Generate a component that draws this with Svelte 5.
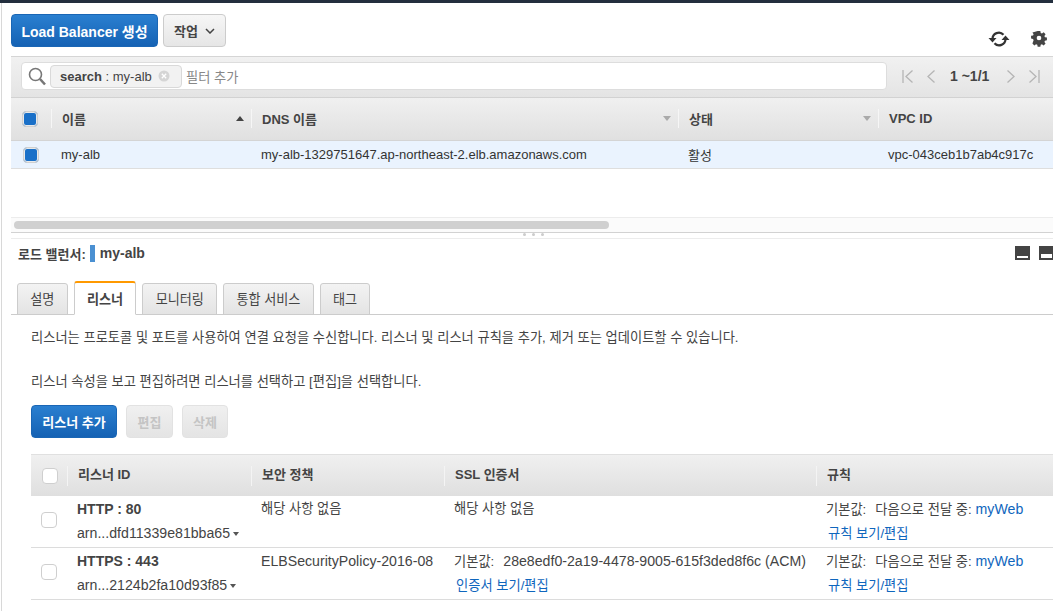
<script lang="ts">
	const columns = [
		{ label: '이름', width: 200, sort: 'up' },
		{ label: 'DNS 이름', width: 427, sort: 'down' },
		{ label: '상태', width: 200, sort: 'down' },
		{ label: 'VPC ID', width: 164, sort: '' }
	]

	const tabs = ['설명', '리스너', '모니터링', '통합 서비스', '태그']

	const listeners = [
		{
			name: 'HTTP : 80',
			arn: 'arn...dfd11339e81bba65',
			policy: '해당 사항 없음',
			cert: '',
			certLink: ''
		},
		{
			name: 'HTTPS : 443',
			arn: 'arn...2124b2fa10d93f85',
			policy: 'ELBSecurityPolicy-2016-08',
			cert: '28e8edf0-2a19-4478-9005-615f3ded8f6c (ACM)',
			certLink: '인증서 보기/편집'
		}
	]
</script>

<div class="page">
	<div class="topbar"></div>
	<main class="console">
		<div class="actions">
			<button class="btn primary create">Load Balancer 생성</button>
			<button class="btn menu">
				작업
				<svg width="10" height="6" viewBox="0 0 10 6"><path d="M1 1l4 4 4-4" fill="none" stroke="#444" stroke-width="1.5" /></svg>
			</button>
			<div class="tools">
				<svg width="22" height="18" viewBox="0 0 22 18">
					<path d="M4.5 9a6.3 6.3 0 0 1 11-4.2" fill="none" stroke="#333" stroke-width="2.2" />
					<path d="M17.5 9a6.3 6.3 0 0 1-11 4.2" fill="none" stroke="#333" stroke-width="2.2" />
					<path d="M0.5 8h8l-4 4.5z M13.5 10h8l-4-4.5z" fill="#333" />
				</svg>
				<svg width="16" height="16" viewBox="0 0 16 16">
					<path
						fill="#444"
						fill-rule="evenodd"
						d="M6.5 0h3l.4 2.2 1.4.6L13.2 1.5l2.1 2.1-1.3 1.9.6 1.4 2.2.4v3l-2.2.4-.6 1.4 1.3 1.9-2.1 2.1-1.9-1.3-1.4.6-.4 2.2h-3l-.4-2.2-1.4-.6-1.9 1.3-2.1-2.1L2 10.2l-.6-1.4L-.8 8.4v-3l2.2-.4.6-1.4L.7 1.8M8 5.2a2.6 2.6 0 1 0 0 5.2 2.6 2.6 0 0 0 0-5.2z"
						transform="translate(.8 0) scale(.9)"
					/>
				</svg>
			</div>
		</div>

		<div class="filterbar">
			<div class="search">
				<svg class="glass" width="18" height="19" viewBox="0 0 18 19">
					<circle cx="7.5" cy="7.5" r="6" fill="none" stroke="#777" stroke-width="1.6" />
					<path d="M12 12l5 5.5" stroke="#777" stroke-width="2.6" />
				</svg>
				<span class="token">
					<span><b>search</b> : my-alb</span>
					<svg width="12" height="12" viewBox="0 0 12 12">
						<circle cx="6" cy="6" r="5.5" fill="#d5d5d5" />
						<path d="M3.8 3.8l4.4 4.4M8.2 3.8l-4.4 4.4" stroke="#fff" stroke-width="1.3" />
					</svg>
				</span>
				<span class="placeholder">필터 추가</span>
			</div>
			<div class="pager">
				<svg width="11" height="13" viewBox="0 0 11 13"><path d="M1 0v13M10.5 .5L4 6.5l6.5 6" fill="none" stroke="#b5b5b5" stroke-width="1.3" /></svg>
				<svg class="gap" width="8" height="13" viewBox="0 0 8 13"><path d="M7.5 .5L1 6.5l6.5 6" fill="none" stroke="#b5b5b5" stroke-width="1.3" /></svg>
				<span class="count">1 ~1/1</span>
				<svg width="8" height="13" viewBox="0 0 8 13"><path d="M.5 .5L7 6.5l-6.5 6" fill="none" stroke="#b5b5b5" stroke-width="1.3" /></svg>
				<svg class="gap" width="11" height="13" viewBox="0 0 11 13"><path d="M10 0v13M.5 .5L7 6.5l-6.5 6" fill="none" stroke="#b5b5b5" stroke-width="1.3" /></svg>
			</div>
		</div>

		<div class="lb-head">
			<div class="check-cell"><span class="check on"></span></div>
			{#each columns as col}
				<div class="lb-col" style="width: {col.width}px">
					<span>{col.label}</span>
					{#if col.sort}<i class="sort {col.sort}"></i>{/if}
				</div>
			{/each}
		</div>
		<div class="lb-row">
			<div class="check-cell row-check"><span class="check on"></span></div>
			<div class="lb-cell" style="width: {columns[0].width}px">my-alb</div>
			<div class="lb-cell" style="width: {columns[1].width}px">my-alb-1329751647.ap-northeast-2.elb.amazonaws.com</div>
			<div class="lb-cell" style="width: {columns[2].width}px">활성</div>
			<div class="lb-cell" style="width: {columns[3].width}px">vpc-043ceb1b7ab4c917c</div>
		</div>

		<div class="scroller"><div class="thumb"></div></div>
		<div class="splitter"><span></span><span></span><span></span></div>

		<div class="title-row">
			<span class="title-label">로드 밸런서:</span>
			<span class="swatch"></span>
			<span class="title-name">my-alb</span>
			<span class="pane-icons">
				<span class="pane small"></span>
				<span class="pane large"></span>
			</span>
		</div>

		<div class="tabs">
			{#each tabs as tab, i}
				<div class="tab" class:active={i === 1}>{tab}</div>
			{/each}
		</div>

		<section class="detail">
			<p class="intro">리스너는 프로토콜 및 포트를 사용하여 연결 요청을 수신합니다. 리스너 및 리스너 규칙을 추가, 제거 또는 업데이트할 수 있습니다.</p>
			<p class="intro second">리스너 속성을 보고 편집하려면 리스너를 선택하고 [편집]을 선택합니다.</p>

			<div class="detail-actions">
				<button class="btn primary add">리스너 추가</button>
				<button class="btn disabled edit">편집</button>
				<button class="btn disabled del">삭제</button>
			</div>

			<div class="ls-grid ls-head">
				<div class="ls-check"><span class="check"></span></div>
				<div class="ls-th">리스너 ID</div>
				<div class="ls-th">보안 정책</div>
				<div class="ls-th">SSL 인증서</div>
				<div class="ls-th">규칙</div>
			</div>
			{#each listeners as row}
				<div class="ls-grid ls-row">
					<div class="ls-check body"><span class="check"></span></div>
					<div class="ls-td first">
						<strong>{row.name}</strong>
						<span class="arn">{row.arn}<i class="caret"></i></span>
					</div>
					<div class="ls-td" class:ko={!row.cert}>{row.policy}</div>
					<div class="ls-td">
						{#if row.cert}
							<span class="kv"><span class="ko">기본값:</span><em>{row.cert}</em></span>
							<a href="#cert" class="cert-link ko">{row.certLink}</a>
						{:else}
							<span class="ko">해당 사항 없음</span>
						{/if}
					</div>
					<div class="ls-td">
						<span class="kv"><span class="ko">기본값:</span><em class="ko">다음으로 전달 중:</em> <a href="#web">myWeb</a></span>
						<a href="#rules" class="rule-link ko">규칙 보기/편집</a>
					</div>
				</div>
			{/each}
		</section>
	</main>
</div>

<style>
	:global(body) {
		margin: 0;
		background: #fff;
		overflow: hidden;
	}

	.page {
		width: 1053px;
		height: 611px;
		overflow: hidden;
		font-family: 'Liberation Sans', 'Noto Sans CJK KR', sans-serif;
		font-size: 13px;
		color: #444;
	}

	.topbar {
		height: 3px;
		background: #232f3e;
	}

	.console {
		margin-left: 1px;
		padding-left: 9px;
		border-left: 1px solid #d8d8d8;
		height: 608px;
	}

	.ko {
		font-size: 13.25px;
	}

	.btn {
		box-sizing: border-box;
		border-radius: 4px;
		font-family: inherit;
		font-weight: 700;
		font-size: 13px;
		padding: 0;
		border: 1px solid #ccc;
	}

	.primary {
		color: #fff;
		background: linear-gradient(#2a7fd0, #1562b4);
		border-color: #1a66b5;
	}

	.disabled {
		color: #c4c4c4;
		background: linear-gradient(#f0f0f0, #e4e4e4);
		border-color: #e2e2e2;
	}

	.actions {
		display: flex;
		align-items: flex-start;
		height: 53px;
		padding-top: 11px;
		box-sizing: border-box;
	}

	.create {
		width: 147px;
		height: 33px;
		font-size: 14px;
	}

	.menu {
		width: 63px;
		height: 33px;
		margin-left: 5px;
		color: #444;
		background: linear-gradient(#f6f6f6, #e6e6e6);
		display: flex;
		align-items: center;
		justify-content: center;
		gap: 7px;
	}

	.tools {
		margin-left: auto;
		display: flex;
		align-items: center;
		gap: 21px;
		padding: 16px 6px 0 0;
	}

	.filterbar {
		display: flex;
		align-items: center;
		height: 42px;
		box-sizing: border-box;
		padding: 0 0 2px 10px;
		background: linear-gradient(#f1f1f1, #e4e4e4);
		border-top: 1px solid #d5d5d5;
		border-bottom: 1px solid #d2d2d2;
	}

	.search {
		display: flex;
		align-items: center;
		box-sizing: border-box;
		width: 866px;
		height: 28px;
		padding-left: 6px;
		background: #fff;
		border: 1px solid #ddd;
		border-radius: 4px;
	}

	.glass {
		margin-right: 4px;
	}

	.token {
		display: flex;
		align-items: center;
		gap: 6px;
		box-sizing: border-box;
		width: 132px;
		height: 23px;
		padding: 0 5px 0 9px;
		background: #f2f2f2;
		border: 1px solid #d9d9d9;
		border-radius: 4px;
		white-space: pre;
	}

	.placeholder {
		margin-left: 4px;
		font-size: 13.25px;
		color: #888;
	}

	.pager {
		display: flex;
		align-items: center;
		margin-left: 15px;
	}

	.pager .gap {
		margin-left: 14px;
	}

	.count {
		width: 41px;
		margin: 0 16px 0 15px;
		font-weight: 700;
		font-size: 14px;
		color: #444;
		white-space: nowrap;
	}

	.lb-head,
	.lb-row {
		display: flex;
		overflow: hidden;
	}

	.lb-head {
		height: 43px;
		box-sizing: border-box;
		align-items: center;
		background: linear-gradient(#f0f0f0, #e0e0e0);
		border-bottom: 1px solid #d4d4d4;
		font-weight: 700;
	}

	.lb-row {
		height: 28px;
		box-sizing: border-box;
		align-items: center;
		background: #eaf3fe;
		border-bottom: 1px solid #dedede;
		color: #333;
	}

	.check-cell {
		flex: none;
		width: 40px;
		padding-left: 11px;
		box-sizing: border-box;
		display: flex;
	}

	.row-check {
		padding-left: 12px;
	}

	.check {
		box-sizing: border-box;
		display: block;
		width: 16px;
		height: 16px;
		border-radius: 4px;
		background: #fff;
		border: 1px solid #cfcfcf;
	}

	.check.on {
		background: #1a70c8;
		box-shadow: inset 0 0 0 1px #e9e9e9;
		border-color: #d0d0d0;
	}

	.lb-col {
		flex: none;
		box-sizing: border-box;
		height: 19px;
		margin-bottom: 1px;
		padding: 0 7px 0 10px;
		border-left: 1px solid #f6f6f6;
		display: flex;
		align-items: center;
		justify-content: space-between;
	}

	.lb-cell {
		flex: none;
		box-sizing: border-box;
		padding-left: 10px;
		white-space: nowrap;
	}

	.sort {
		width: 0;
		height: 0;
		border-left: 4px solid transparent;
		border-right: 4px solid transparent;
	}

	.sort.up {
		border-bottom: 5px solid #444;
	}

	.sort.down {
		border-top: 5px solid #aaa;
	}

	.scroller {
		box-sizing: border-box;
		height: 16px;
		margin-top: 48px;
		padding: 3px;
		background: #fbfbfb;
		border-top: 1px solid #ececec;
		border-bottom: 1px solid #d2d2d2;
	}

	.thumb {
		width: 595px;
		height: 8px;
		border-radius: 4px;
		background: #d0d0d0;
	}

	.splitter {
		height: 5px;
		display: flex;
		justify-content: center;
		gap: 3px;
		border-bottom: 1px solid #ececec;
	}

	.splitter span {
		width: 3px;
		height: 3px;
		margin-left: 3px;
		border-radius: 50%;
		background: #ccc;
	}

	.title-row {
		display: flex;
		align-items: center;
		height: 28px;
		padding-left: 7px;
		box-sizing: border-box;
		font-weight: 700;
		font-size: 13px;
		color: #444;
	}

	.swatch {
		width: 5px;
		height: 17px;
		margin: 0 5px 0 4px;
		background: #4a90d2;
	}

	.title-name {
		font-size: 14px;
	}

	.pane-icons {
		margin-left: auto;
		display: flex;
		gap: 9px;
	}

	.pane {
		display: block;
		width: 15px;
		height: 14px;
		background: #444;
		position: relative;
	}

	/* white strip, docked to the bottom of the icon */
	.pane::after {
		content: '';
		position: absolute;
		left: 2px;
		right: 2px;
		bottom: 2px;
		background: #fff;
	}

	.pane.small::after {
		height: 2px;
	}

	.pane.large {
		width: 14px;
	}

	.pane.large::after {
		height: 4px;
		right: 1px;
	}

	.tabs {
		display: flex;
		align-items: flex-end;
		gap: 6px;
		height: 33px;
		margin-top: 14px;
		padding-left: 6px;
		border-bottom: 1px solid #ccc;
	}

	.tab {
		box-sizing: border-box;
		height: 32px;
		margin-bottom: -1px;
		padding: 0 12.3px;
		line-height: 31px;
		font-size: 13.1px;
		background: linear-gradient(#f3f3f3, #e4e4e4);
		border: 1px solid #ccc;
		border-radius: 3px 3px 0 0;
		color: #444;
	}

	.tab.active {
		height: 34px;
		line-height: 33px;
		background: #fff;
		border-top: 2px solid #f90;
		border-bottom-color: #fff;
		font-weight: 700;
	}

	.detail {
		padding: 14px 0 0 20px;
	}

	.intro {
		margin: 0;
		font-size: 13.25px;
		line-height: 18px;
		color: #444;
		white-space: nowrap;
	}

	.intro.second {
		margin-top: 26px;
	}

	.detail-actions {
		display: flex;
		gap: 9px;
		margin-top: 14px;
	}

	.add {
		width: 86px;
		height: 33px;
	}

	.edit {
		width: 47px;
		height: 33px;
	}

	.del {
		width: 46px;
		height: 33px;
	}

	.ls-grid {
		display: grid;
		grid-template-columns: 36px 184px 193px 372px 1fr;
	}

	.ls-head {
		height: 42px;
		margin-top: 16px;
		box-sizing: border-box;
		align-items: center;
		background: linear-gradient(#f0f0f0, #dfdfdf);
		border-top: 1px solid #e0e0e0;
		font-weight: 700;
	}

	.ls-row {
		height: 52px;
		box-sizing: border-box;
		border-bottom: 1px solid #dcdcdc;
	}

	.ls-check {
		padding-left: 11px;
		height: 16px;
	}

	.ls-check.body {
		padding: 16px 0 0 10px;
	}

	.ls-th {
		box-sizing: border-box;
		height: 20px;
		line-height: 17px;
		padding-left: 10px;
		border-left: 1px solid #f4f4f4;
		white-space: nowrap;
	}

	.ls-td {
		display: flex;
		flex-direction: column;
		align-items: flex-start;
		padding: 4px 0 0 10px;
		font-size: 14.15px;
		line-height: 18px;
		white-space: nowrap;
		color: #444;
	}

	.ls-td.ko {
		font-size: 13.25px;
	}

	.ls-td strong {
		font-size: 14px;
		color: #444;
	}

	.arn {
		margin-top: 6px;
		display: flex;
		align-items: center;
	}

	.caret {
		margin: 1px 0 0 3px;
		border-left: 3.5px solid transparent;
		border-right: 3.5px solid transparent;
		border-top: 4px solid #555;
	}

	.kv em {
		font-style: normal;
		margin-left: 9px;
	}

	a {
		color: #0f66bd;
		text-decoration: none;
	}

	.cert-link,
	.rule-link {
		margin: 6px 0 0 2px;
	}
</style>
